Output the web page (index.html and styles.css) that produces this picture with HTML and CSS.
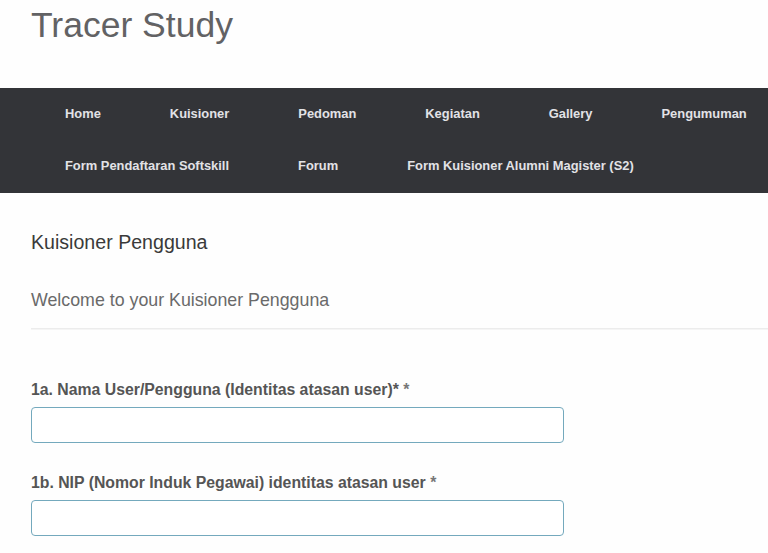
FILE: index.html
```html
<!DOCTYPE html>
<html lang="id">
<head>
<meta charset="utf-8">
<title>Tracer Study</title>
<link rel="stylesheet" href="styles.css">
</head>
<body>
<header class="site-header">
  <h1 class="site-title">Tracer Study</h1>
</header>
<nav class="main-nav">
  <a href="#">Home</a>
  <a href="#">Kuisioner</a>
  <a href="#">Pedoman</a>
  <a href="#">Kegiatan</a>
  <a href="#">Gallery</a>
  <a href="#">Pengumuman</a>
  <a href="#">Form Pendaftaran Softskill</a>
  <a href="#">Forum</a>
  <a href="#">Form Kuisioner Alumni Magister (S2)</a>
</nav>
<main class="content">
  <h2 class="page-title">Kuisioner Pengguna</h2>
  <p class="welcome">Welcome to your Kuisioner Pengguna</p>
  <div class="divider"></div>
  <form class="quiz">
    <div class="question">
      <label class="q-label">1a. Nama User/Pengguna (Identitas atasan user)* <span class="req">*</span></label>
      <input class="q-input" type="text">
    </div>
    <div class="question">
      <label class="q-label">1b. NIP (Nomor Induk Pegawai) identitas atasan user <span class="req">*</span></label>
      <input class="q-input" type="text">
    </div>
  </form>
</main>
</body>
</html>
```
FILE: styles.css
```css
html, body {
  margin: 0;
  padding: 0;
  background: #fefefe;
  overflow: hidden;
  font-family: "Liberation Sans", Arial, sans-serif;
}

.site-header {
  height: 88px;
  padding: 5px 0 0 31px;
  box-sizing: border-box;
}

.site-title {
  margin: 0;
  font-size: 35.5px;
  line-height: 40px;
  font-weight: normal;
  color: #626264;
}

.main-nav {
  background: #333438;
  display: flex;
  flex-wrap: wrap;
  column-gap: 69px;
  padding: 0 0 1px 65px;
  width: 768px;
  box-sizing: border-box;
}

.main-nav a {
  color: #e2e2e6;
  text-decoration: none;
  font-weight: bold;
  font-size: 12.9px;
  line-height: 52px;
  white-space: nowrap;
}

.content {
  padding: 38px 0 0 31px;
}

.page-title {
  margin: 0;
  font-size: 19.6px;
  line-height: 22px;
  font-weight: normal;
  color: #3a3a3a;
}

.welcome {
  margin: 37px 0 0;
  font-size: 17.8px;
  line-height: 20px;
  color: #6a6a6a;
}

.divider {
  margin-top: 18px;
  height: 1px;
  background: #ececec;
  border-bottom: 1px solid #f5f5f5;
}

.quiz {
  margin: 51px 0 0;
}

.question {
  display: flex;
  flex-direction: column;
  margin-bottom: 31px;
}

.q-label {
  font-size: 15.8px;
  line-height: 18px;
  font-weight: bold;
  color: #555;
  margin-bottom: 8px;
}

.req {
  color: #777;
}

.q-input {
  width: 533px;
  height: 36px;
  box-sizing: border-box;
  border: 1px solid #74a9bd;
  border-radius: 4px;
  background: #fff;
  margin: 0;
  padding: 6px 12px;
  font-size: 14px;
}
```
